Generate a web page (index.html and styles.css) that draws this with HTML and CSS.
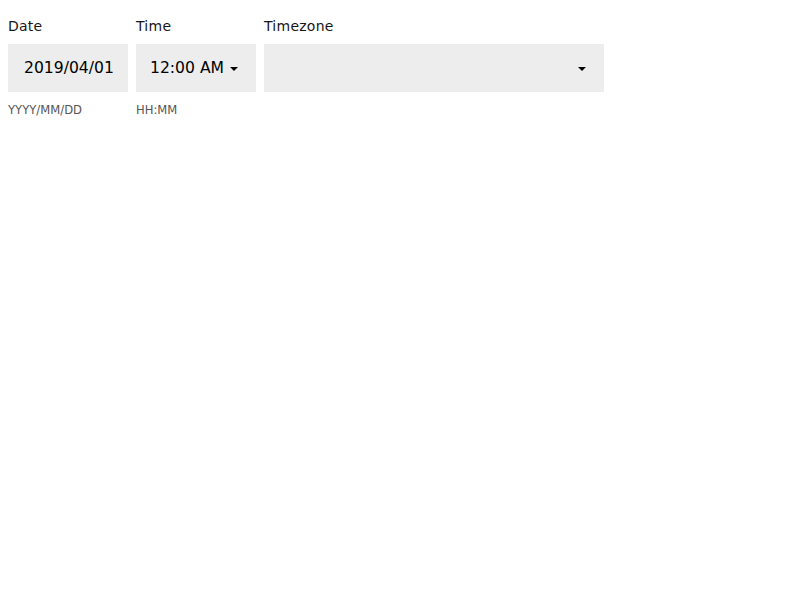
FILE: index.html
```html
<!DOCTYPE html>
<html>
<head>
<meta charset="utf-8">
<link rel="stylesheet" href="styles.css">
</head>
<body>
<div class="row">
  <div class="field date">
    <label class="label">Date</label>
    <div class="box"><span class="value">2019/04/01</span></div>
    <div class="helper">YYYY/MM/DD</div>
  </div>
  <div class="field time">
    <label class="label">Time</label>
    <div class="box"><span class="value">12:00 AM</span><span class="caret"></span></div>
    <div class="helper">HH:MM</div>
  </div>
  <div class="field tz">
    <label class="label">Timezone</label>
    <div class="box"><span class="value"></span><span class="caret"></span></div>
  </div>
</div>
</body>
</html>
```

FILE: styles.css
```css
html, body {
  margin: 0;
  padding: 0;
  background: #ffffff;
  font-family: "DejaVu Sans", sans-serif;
  color: #000;
}
.row {
  display: flex;
  gap: 8px;
  padding: 16px 8px 0 8px;
  align-items: flex-start;
}
.field {
  display: flex;
  flex-direction: column;
}
.date { width: 120px; }
.time { width: 120px; }
.tz { width: 340px; }
.label {
  font-size: 14px;
  line-height: 20px;
  height: 20px;
  margin-bottom: 8px;
  letter-spacing: 0.25px;
  color: #161616;
}
.box {
  height: 48px;
  background: #ededed;
  display: flex;
  align-items: center;
  font-size: 15.6px;
  color: #000;
  box-sizing: border-box;
}
.date .box { padding-left: 16px; }
.time .box { padding-left: 14px; }
.tz .box { padding-left: 16px; padding-right: 18px; }
.value { white-space: nowrap; }
.tz .value { flex: 1; }
.caret {
  width: 0;
  height: 0;
  border-left: 4px solid transparent;
  border-right: 4px solid transparent;
  border-top: 4px solid #000;
  margin-top: 1px;
}
.time .caret { margin-left: 6px; }
.helper {
  font-size: 11.6px;
  line-height: 16px;
  margin-top: 10px;
  color: #565656;
}
```
